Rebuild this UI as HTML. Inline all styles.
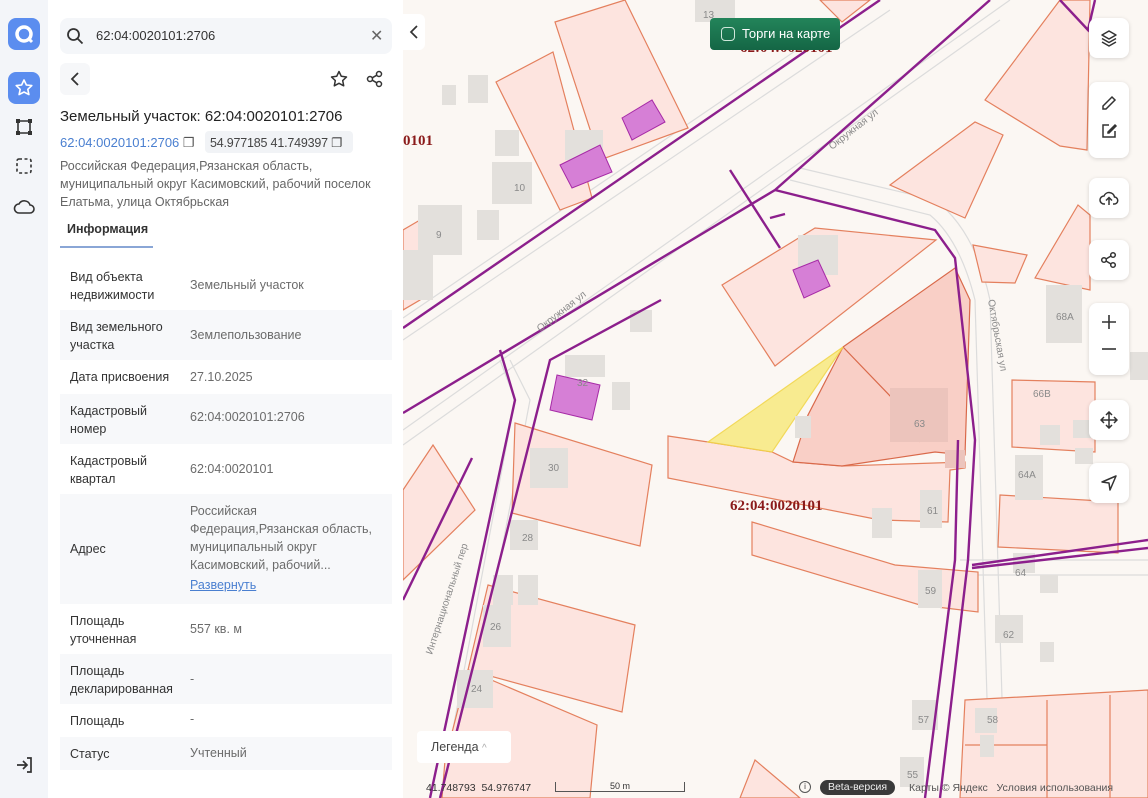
<!DOCTYPE html>
<html><head><meta charset="utf-8"><style>
*{box-sizing:border-box;margin:0;padding:0}
body{width:1148px;height:798px;overflow:hidden;font-family:"Liberation Sans","Noto Sans CJK SC",sans-serif;background:#fff;position:relative}
.side{position:absolute;left:0;top:0;width:48px;height:798px;background:#f3f5f9}
.panel{position:absolute;left:48px;top:0;width:355px;height:798px;background:#fff}
.map{position:absolute;left:403px;top:0;width:745px;height:798px;background:#fbf7f3;overflow:hidden}
.ab{position:absolute;white-space:nowrap}
.row{position:absolute;left:60px;width:332px;font-size:12.5px;color:#333}
.row .l{position:absolute;left:10px;line-height:18px}
.row .v{position:absolute;left:130px;line-height:18px;color:#6b6b6b}
.g{background:#f7f8fa}
.ctl{position:absolute;left:1089px;width:40px;background:#fff;border-radius:8px;box-shadow:0 1px 4px rgba(0,0,0,.15)}
.ctl svg{display:block;margin:11px auto}
</style></head><body>
<div class="side">
 <div class="ab" style="left:8px;top:18px;width:32px;height:32px;border-radius:8px;background:#5b8def"><svg width="32" height="32"><circle cx="16" cy="16" r="7" fill="none" stroke="#fff" stroke-width="3.5"/><path d="M21 21l3 3" stroke="#fff" stroke-width="3"/></svg></div>
 <div class="ab" style="left:8px;top:72px;width:32px;height:32px;border-radius:8px;background:#5b8def"><svg width="32" height="32"><path d="M16 8l2.4 5 5.4.6-4 3.7 1.1 5.3L16 20l-4.9 2.6 1.1-5.3-4-3.7 5.4-.6z" fill="none" stroke="#fff" stroke-width="1.6" stroke-linejoin="round"/></svg></div>
 <svg class="ab" style="left:14px;top:117px" width="20" height="20"><path d="M4 4h12v12H4z" fill="none" stroke="#333" stroke-width="1.6"/><rect x="2" y="2" width="4" height="4" fill="#333"/><rect x="14" y="2" width="4" height="4" fill="#333"/><rect x="2" y="14" width="4" height="4" fill="#333"/><rect x="14" y="14" width="4" height="4" fill="#333"/></svg>
 <svg class="ab" style="left:15px;top:157px" width="18" height="18"><rect x="2" y="2" width="14" height="14" rx="2" fill="none" stroke="#333" stroke-width="1.6" stroke-dasharray="3 2.5"/></svg>
 <svg class="ab" style="left:13px;top:198px" width="22" height="18"><path d="M6 15h11a4 4 0 000-8 6 6 0 00-11-1 4.5 4.5 0 000 9z" fill="none" stroke="#333" stroke-width="1.6"/></svg>
 <svg class="ab" style="left:14px;top:755px" width="20" height="20"><path d="M3 10h10M9 6l4 4-4 4M13 3h4v14h-4" fill="none" stroke="#333" stroke-width="1.7"/></svg>
</div>
<div class="panel">
 <div class="ab" style="left:12px;top:18px;width:332px;height:36px;background:#f4f6f9;border-radius:8px"></div>
 <svg class="ab" style="left:18px;top:27px" width="18" height="18"><circle cx="7.5" cy="7.5" r="5.5" fill="none" stroke="#333" stroke-width="1.8"/><path d="M11.5 11.5l5 5" stroke="#333" stroke-width="1.8"/></svg>
 <div class="ab" style="left:48px;top:28px;font-size:13px;color:#333">62:04:0020101:2706</div>
 <div class="ab" style="left:322px;top:26px;font-size:16px;color:#666">✕</div>
 <div class="ab" style="left:12px;top:63px;width:30px;height:32px;background:#f6f7f9;border-radius:6px"></div>
 <svg class="ab" style="left:20px;top:71px" width="14" height="16"><path d="M10 2L4 8l6 6" fill="none" stroke="#333" stroke-width="1.8"/></svg>
 <svg class="ab" style="left:282px;top:70px" width="18" height="18"><path d="M9 1.5l2.3 4.8 5.2.7-3.8 3.6 1 5.2L9 13.3l-4.7 2.5 1-5.2L1.5 7l5.2-.7z" fill="none" stroke="#333" stroke-width="1.5" stroke-linejoin="round"/></svg>
 <svg class="ab" style="left:318px;top:70px" width="18" height="18"><circle cx="13" cy="4" r="2.5" fill="none" stroke="#333" stroke-width="1.5"/><circle cx="4" cy="9" r="2.5" fill="none" stroke="#333" stroke-width="1.5"/><circle cx="13" cy="14" r="2.5" fill="none" stroke="#333" stroke-width="1.5"/><path d="M6.2 7.8l4.6-2.6M6.2 10.2l4.6 2.6" stroke="#333" stroke-width="1.5"/></svg>
 <div class="ab" style="left:12px;top:108px;font-size:15px;color:#222">Земельный участок: 62:04:0020101:2706</div>
 <div class="ab" style="left:12px;top:135px;font-size:13px;color:#4a7fd0">62:04:0020101:2706 <span style="color:#555">❐</span></div>
 <div class="ab" style="left:157px;top:131px;width:148px;height:22px;background:#f1f3f6;border-radius:4px;font-size:12.5px;color:#444;padding:4px 5px;letter-spacing:-.2px">54.977185 41.749397 <span>❐</span></div>
 <div class="ab" style="left:12px;top:157px;font-size:12.5px;color:#666;line-height:18px;width:330px;white-space:normal">Российская Федерация,Рязанская область, муниципальный округ Касимовский, рабочий поселок Елатьма, улица Октябрьская</div>
 <div class="ab" style="left:19px;top:222px;font-size:12.5px;font-weight:bold;color:#333">Информация</div>
 <div class="ab" style="left:12px;top:246px;width:93px;height:2px;background:#8aa6d6"></div>
</div>
<div class="row" style="top:260px;height:50px"><div class="l" style="top:8px">Вид объекта<br>недвижимости</div><div class="v" style="top:16px">Земельный участок</div></div>
<div class="row g" style="top:310px;height:50px"><div class="l" style="top:8px">Вид земельного<br>участка</div><div class="v" style="top:16px">Землепользование</div></div>
<div class="row" style="top:360px;height:34px"><div class="l" style="top:8px">Дата присвоения</div><div class="v" style="top:8px">27.10.2025</div></div>
<div class="row g" style="top:394px;height:50px"><div class="l" style="top:8px">Кадастровый<br>номер</div><div class="v" style="top:14px">62:04:0020101:2706</div></div>
<div class="row" style="top:444px;height:50px"><div class="l" style="top:8px">Кадастровый<br>квартал</div><div class="v" style="top:16px">62:04:0020101</div></div>
<div class="row g" style="top:494px;height:110px"><div class="l" style="top:46px">Адрес</div><div class="v" style="top:8px;width:195px">Российская Федерация,Рязанская область, муниципальный округ Касимовский, рабочий...<br><span style="color:#4a7fd0;text-decoration:underline;line-height:22px">Развернуть</span></div></div>
<div class="row" style="top:604px;height:50px"><div class="l" style="top:8px">Площадь<br>уточненная</div><div class="v" style="top:16px">557 кв. м</div></div>
<div class="row g" style="top:654px;height:50px"><div class="l" style="top:8px">Площадь<br>декларированная</div><div class="v" style="top:16px">-</div></div>
<div class="row" style="top:704px;height:33px"><div class="l" style="top:8px">Площадь</div><div class="v" style="top:6px">-</div></div>
<div class="row g" style="top:737px;height:33px"><div class="l" style="top:8px">Статус</div><div class="v" style="top:7px">Учтенный</div></div>

<div class="map">
<svg width="745" height="798" style="position:absolute;left:0;top:0">
<g transform="translate(-403,0)" font-family="Liberation Sans,sans-serif">
 <g fill="none" stroke="#dcdcdc" stroke-width="1.2">
  <path d="M403 318L870 0M403 340L890 10M403 430L1010 0M403 445L1000 20"/>
  <path d="M790 180L930 215Q960 240 975 300L990 798M800 168L935 200Q975 230 990 300L1005 798"/>
  <path d="M510 360L530 400L455 798M500 360L515 400L440 798"/>
  <path d="M960 560L1148 560M960 575L1148 575"/>
 </g>
 <g fill="#fde4df" stroke="#e4805e" stroke-width="1.2">
  <path d="M496 82L553 52L592 198L560 210Z"/>
  <path d="M555 22L625 0L688 128L600 160Z"/>
  <path d="M820 0L870 0L842 22Z"/>
  <path d="M985 100L1060 0L1090 0L1087 150L1060 146Z"/>
  <path d="M890 185L975 122L1003 135L965 218Z"/>
  <path d="M1035 278L1078 205L1090 215L1090 290Z"/>
  <path d="M973 245L1027 255L1015 283L982 282Z"/>
  <path d="M722 285L815 228L936 240L775 366Z"/>
  <path d="M403 230L420 220L420 300L403 310Z"/>
  <path d="M668 436L708 442L772 452L793 462L842 466L965 462L965 468L950 470L948 522L880 520L668 478Z"/>
  <path d="M752 522L895 565L978 572L978 612L920 605L752 555Z"/>
  <path d="M515 423L652 465L640 546L512 513Z"/>
  <path d="M403 490L433 445L475 510L403 580Z"/>
  <path d="M488 585L635 625L622 712L468 670Z"/>
  <path d="M468 670L597 725L590 798L442 798L445 760Z"/>
  <path d="M1012 380L1095 382L1095 452L1012 447Z"/>
  <path d="M1000 495L1118 502L1118 553L998 547Z"/>
  <path d="M965 700L1148 690L1148 798L960 798Z"/>
  <path d="M1047 700L1047 798M1110 695L1110 798M965 745L1047 745" fill="none"/>
  <path d="M755 760L800 798L740 798Z"/>
 </g>
 <path d="M843 347L955 268L970 300L965 455L935 452L842 466L793 462L808 415Z" fill="#f9cfc6" stroke="#d9694a" stroke-width="1.2"/>
 <path d="M843 347L918 425L920 442" fill="none" stroke="#d9694a" stroke-width="1.2"/>
 <path d="M708 442L843 347L772 452Z" fill="#f8ea86" stroke="#f2d64a" stroke-width="1.2" opacity=".9"/>
 <g fill="#e3e0dc">
  <rect x="442" y="85" width="14" height="20"/><rect x="468" y="75" width="20" height="28"/>
  <rect x="495" y="130" width="24" height="26"/><rect x="492" y="162" width="40" height="42"/>
  <rect x="418" y="205" width="44" height="50"/><rect x="477" y="210" width="22" height="30"/>
  <rect x="403" y="250" width="30" height="50"/><rect x="565" y="130" width="38" height="30"/>
  <rect x="630" y="310" width="22" height="22"/><rect x="612" y="382" width="18" height="28"/>
  <rect x="565" y="355" width="40" height="22"/><rect x="798" y="235" width="40" height="40"/>
  <rect x="695" y="0" width="40" height="22"/><rect x="1046" y="285" width="36" height="58"/>
  <rect x="1130" y="352" width="18" height="28"/><rect x="1040" y="425" width="20" height="20"/>
  <rect x="1073" y="420" width="18" height="18"/><rect x="1015" y="455" width="28" height="45"/>
  <rect x="1075" y="448" width="18" height="16"/><rect x="1013" y="553" width="22" height="20"/>
  <rect x="1040" y="575" width="18" height="18"/><rect x="995" y="615" width="28" height="28"/>
  <rect x="1040" y="642" width="14" height="20"/><rect x="912" y="700" width="26" height="30"/>
  <rect x="975" y="708" width="22" height="25"/><rect x="980" y="735" width="14" height="22"/>
  <rect x="900" y="757" width="24" height="30"/><rect x="872" y="508" width="20" height="30"/>
  <rect x="920" y="490" width="22" height="38"/><rect x="918" y="570" width="24" height="38"/>
  <rect x="795" y="416" width="16" height="22"/><rect x="510" y="520" width="28" height="30"/>
  <rect x="493" y="575" width="20" height="30"/><rect x="518" y="575" width="20" height="30"/>
  <rect x="483" y="605" width="28" height="42"/><rect x="457" y="670" width="36" height="38"/>
  <rect x="530" y="448" width="38" height="40"/>
 </g>
 <g fill="#ecc4bc"><rect x="890" y="388" width="58" height="54"/><rect x="945" y="450" width="20" height="18"/></g>
 <g fill="#d67fd6" stroke="#a62aa6" stroke-width="1">
  <path d="M560 165L600 145L612 172L572 188Z"/><path d="M622 118L652 100L665 122L632 140Z"/>
  <path d="M793 270L818 260L830 286L804 298Z"/><path d="M557 375L600 385L592 420L550 410Z"/>
 </g>
 <g fill="none" stroke="#8c1f8c" stroke-width="2.4">
  <path d="M403 328L880 0"/>
  <path d="M403 413L775 190L990 0"/>
  <path d="M775 190L935 230L955 258L975 440L968 560L940 798"/>
  <path d="M958 440L955 560L925 798"/>
  <path d="M730 170L780 248M770 218L785 214"/>
  <path d="M661 300L550 360L530 440L440 798"/>
  <path d="M500 350L515 400L430 798"/>
  <path d="M472 458L403 600"/>
  <path d="M972 565L1148 540M972 568L1148 548"/>
  <path d="M1095 0L1088 30L1060 0"/>
 </g>
 <g fill="#8a8a8a" font-size="10">
  <text x="514" y="191">10</text><text x="436" y="238">9</text><text x="703" y="18">13</text>
  <text x="1056" y="320">68A</text><text x="1033" y="397">66B</text><text x="1018" y="478">64A</text>
  <text x="1015" y="576">64</text><text x="1003" y="638">62</text><text x="925" y="594">59</text>
  <text x="927" y="514">61</text><text x="914" y="427">63</text><text x="548" y="471">30</text>
  <text x="522" y="541">28</text><text x="490" y="630">26</text><text x="471" y="692">24</text>
  <text x="918" y="723">57</text><text x="987" y="723">58</text><text x="907" y="778">55</text>
  <text x="577" y="386">32</text>
  <text transform="translate(832,150) rotate(-38)">Окружная ул</text>
  <text transform="translate(540,332) rotate(-38)">Окружная ул</text>
  <text transform="translate(988,300) rotate(80)">Октябрьская ул</text>
  <text transform="translate(432,655) rotate(-72)">Интернациональный пер</text>
 </g>
 <g fill="#8a1a1a" font-family="Liberation Serif,serif" font-weight="bold" font-size="15">
  <text x="730" y="510">62:04:0020101</text><text x="403" y="145">0101</text><text x="740" y="52">62:04:0020101</text>
 </g>
</g>
</svg>
 <div class="ab" style="left:0;top:14px;width:22px;height:36px;background:#fff;border-radius:0 6px 6px 0"></div>
 <svg class="ab" style="left:5px;top:24px" width="12" height="16"><path d="M9 2L3 8l6 6" fill="none" stroke="#333" stroke-width="1.7"/></svg>
 <div class="ab" style="left:307px;top:18px;width:130px;height:32px;background:linear-gradient(#23845a,#146645);border-radius:4px;color:#fff;font-size:13px;padding:8px 0 0 32px">Торги на карте</div>
 <div class="ab" style="left:318px;top:27px;width:14px;height:14px;border:1.5px solid #cfe7da;border-radius:4px"></div>
 <div class="ab" style="left:14px;top:731px;width:94px;height:32px;background:#fff;border-radius:4px;font-size:12.5px;color:#444;padding:9px 0 0 14px">Легенда <span style="color:#aaa;font-size:10px">^</span></div>
 <div class="ab" style="left:10px;top:778px;width:730px;height:20px;font-size:10.5px;color:#333">
  <span class="ab" style="left:13px;top:4px">41.748793&nbsp;&nbsp;54.976747</span>
  <span class="ab" style="left:142px;top:4px;width:130px;height:10px;border:1px solid #555;border-top:none;text-align:center;font-size:9px;line-height:8px">50 m</span>
  <span class="ab" style="left:386px;top:3px;width:12px;height:12px;border:1px solid #555;border-radius:50%;font-size:8px;text-align:center;line-height:10px">i</span>
  <span class="ab" style="left:407px;top:2px;width:75px;height:15px;background:#3a3a3a;border-radius:8px;color:#eee;text-align:center;line-height:15px">Beta-версия</span>
  <span class="ab" style="left:496px;top:4px;color:#555">Карты © Яндекс&nbsp;&nbsp;&nbsp;Условия использования</span>
 </div>
</div>
<div class="ctl" style="top:18px;height:40px"><svg width="18" height="18"><path d="M9 2l7 4-7 4-7-4zM2 9.5l7 4 7-4M2 13l7 4 7-4" fill="none" stroke="#333" stroke-width="1.5" stroke-linejoin="round"/></svg></div>
<div class="ctl" style="top:82px;height:76px"><svg width="18" height="18"><path d="M3 13L12 4l3 3-9 9H3z" fill="none" stroke="#333" stroke-width="1.5"/></svg><svg width="18" height="18" style="margin-top:4px"><path d="M9 3H3v12h12V9M8 10l7-7 1 1-7 7H8z" fill="none" stroke="#333" stroke-width="1.5"/></svg></div>
<div class="ctl" style="top:178px;height:40px"><svg width="20" height="18"><path d="M6 15H5a4 4 0 010-8 5.5 5.5 0 0110.5 1 3.5 3.5 0 01-.5 7h-1M10 16V9M7 11.5l3-3 3 3" fill="none" stroke="#333" stroke-width="1.5"/></svg></div>
<div class="ctl" style="top:240px;height:40px"><svg width="18" height="18"><circle cx="13" cy="4" r="2.3" fill="none" stroke="#333" stroke-width="1.5"/><circle cx="4" cy="9" r="2.3" fill="none" stroke="#333" stroke-width="1.5"/><circle cx="13" cy="14" r="2.3" fill="none" stroke="#333" stroke-width="1.5"/><path d="M6 8l5-3M6 10l5 3" stroke="#333" stroke-width="1.5"/></svg></div>
<div class="ctl" style="top:303px;height:72px"><svg width="16" height="16"><path d="M8 1v14M1 8h14" stroke="#333" stroke-width="1.6"/></svg><svg width="16" height="16" style="margin-top:6px"><path d="M1 8h14" stroke="#333" stroke-width="1.6"/></svg></div>
<div class="ctl" style="top:400px;height:40px"><svg width="18" height="18"><path d="M9 1v16M1 9h16M6 4l3-3 3 3M6 14l3 3 3-3M4 6L1 9l3 3M14 6l3 3-3 3" fill="none" stroke="#333" stroke-width="1.5"/></svg></div>
<div class="ctl" style="top:463px;height:40px"><svg width="18" height="18"><path d="M16 2L2 8l7 1 1 7z" fill="none" stroke="#333" stroke-width="1.5" stroke-linejoin="round"/></svg></div>
</body></html>
